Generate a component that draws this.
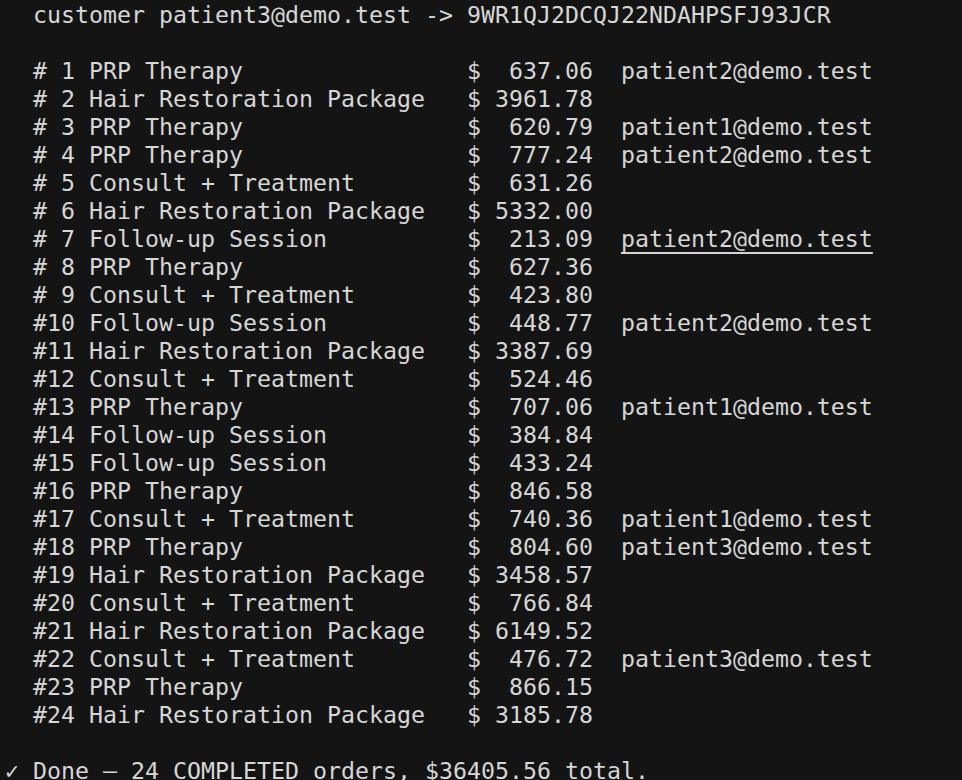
import React from 'react';

type Order = { id: number; name: string; amount: string; email?: string; link?: boolean };

const orders: Order[] = [
  { id: 1, name: 'PRP Therapy', amount: '637.06', email: 'patient2@demo.test' },
  { id: 2, name: 'Hair Restoration Package', amount: '3961.78' },
  { id: 3, name: 'PRP Therapy', amount: '620.79', email: 'patient1@demo.test' },
  { id: 4, name: 'PRP Therapy', amount: '777.24', email: 'patient2@demo.test' },
  { id: 5, name: 'Consult + Treatment', amount: '631.26' },
  { id: 6, name: 'Hair Restoration Package', amount: '5332.00' },
  { id: 7, name: 'Follow-up Session', amount: '213.09', email: 'patient2@demo.test', link: true },
  { id: 8, name: 'PRP Therapy', amount: '627.36' },
  { id: 9, name: 'Consult + Treatment', amount: '423.80' },
  { id: 10, name: 'Follow-up Session', amount: '448.77', email: 'patient2@demo.test' },
  { id: 11, name: 'Hair Restoration Package', amount: '3387.69' },
  { id: 12, name: 'Consult + Treatment', amount: '524.46' },
  { id: 13, name: 'PRP Therapy', amount: '707.06', email: 'patient1@demo.test' },
  { id: 14, name: 'Follow-up Session', amount: '384.84' },
  { id: 15, name: 'Follow-up Session', amount: '433.24' },
  { id: 16, name: 'PRP Therapy', amount: '846.58' },
  { id: 17, name: 'Consult + Treatment', amount: '740.36', email: 'patient1@demo.test' },
  { id: 18, name: 'PRP Therapy', amount: '804.60', email: 'patient3@demo.test' },
  { id: 19, name: 'Hair Restoration Package', amount: '3458.57' },
  { id: 20, name: 'Consult + Treatment', amount: '766.84' },
  { id: 21, name: 'Hair Restoration Package', amount: '6149.52' },
  { id: 22, name: 'Consult + Treatment', amount: '476.72', email: 'patient3@demo.test' },
  { id: 23, name: 'PRP Therapy', amount: '866.15' },
  { id: 24, name: 'Hair Restoration Package', amount: '3185.78' },
];

const pad = (s: string, n: number) => s + ' '.repeat(Math.max(0, n - s.length));
const padL = (s: string, n: number) => ' '.repeat(Math.max(0, n - s.length)) + s;

const Line: React.FC<{ children?: React.ReactNode }> = ({ children }) => (
  <div className="h-[28px] leading-[28px] whitespace-pre">{children ?? ' '}</div>
);

export default function App() {
  return (
    <div className="h-screen w-full overflow-hidden bg-[#141414] text-[#d6d6d6]">
      <div className="-mt-[27px] pl-[5px] font-['DejaVu_Sans_Mono',monospace] text-[23.25px]">
        <Line>{'  customer patient2@demo.test -> 4XK7M2B8RT5HN6WC3VD9ZA1EFG'}</Line>
        <Line>{'  customer patient3@demo.test -> 9WR1QJ2DCQJ22NDAHPSFJ93JCR'}</Line>
        <Line />
        {orders.map((o) => {
          const head = '  #' + padL(String(o.id), 2) + ' ' + pad(o.name, 27) + '$ ' + padL(o.amount, 7);
          return (
            <Line key={o.id}>
              {head}
              {o.email ? '  ' : ''}
              {o.email && (
                <span className={o.link ? 'underline decoration-2 underline-offset-[5px]' : ''}>{o.email}</span>
              )}
            </Line>
          );
        })}
        <Line />
        <Line>{'✓ Done — 24 COMPLETED orders, $36405.56 total.'}</Line>
      </div>
    </div>
  );
}
